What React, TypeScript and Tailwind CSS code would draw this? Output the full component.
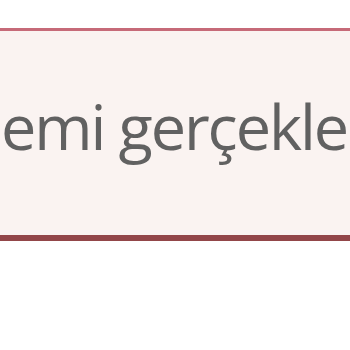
import React from 'react';

export default function App() {
  return (
    <div className="w-[350px] h-[350px] bg-white overflow-hidden pt-[28px]">
      {/* alert box, cropped on both sides */}
      <div className="h-[213px] bg-[#faf3f1] border-t-[3px] border-b-[6px] border-t-[#c66a78] border-b-[#924649] flex items-center">
        <p
          className="whitespace-nowrap pl-[1px] pb-[16px] text-[63px] leading-none tracking-[-2.1px] text-[#616161]"
          style={{ fontFamily: '"Open Sans", sans-serif' }}
        >
          emi gerçekleştirilemedi
        </p>
      </div>
    </div>
  );
}
